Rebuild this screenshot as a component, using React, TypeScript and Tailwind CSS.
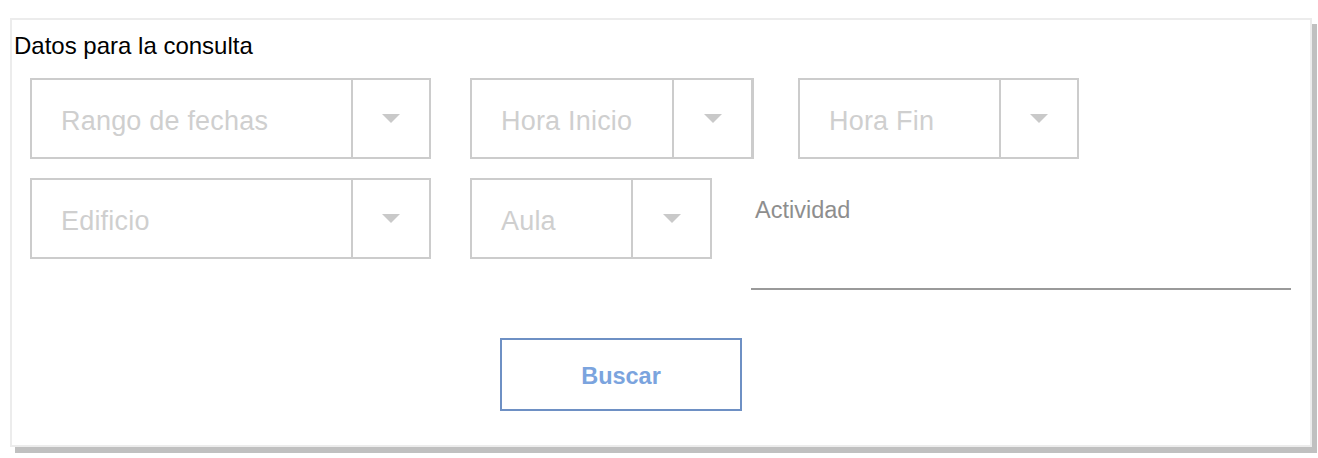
import React from "react";

function Tri() {
  return (
    <svg width="18" height="9" viewBox="0 0 18 9" className="block">
      <polygon points="0,0 18,0 9,9" fill="#c9c9c9" />
    </svg>
  );
}

function SelectBox({
  label,
  width,
  textW,
  thickRight = false,
}: {
  label: string;
  width: string;
  textW: string;
  thickRight?: boolean;
}) {
  return (
    <div
      className={`flex h-[81px] ${width} border-2 border-[#cccccc] ${thickRight ? "border-r-[3px]" : ""} shrink-0`}
    >
      <div className={`flex items-center ${textW} h-full border-r-2 border-[#cccccc] pl-[29px] pt-[6px]`}>
        <span className="text-[27px] tracking-[0.2px] text-[#cfcfcf] leading-none">{label}</span>
      </div>
      <div className="flex-1 flex items-center justify-center">
        <Tri />
      </div>
    </div>
  );
}

export default function App() {
  return (
    <div
      className="w-[1318px] h-[458px] bg-white pt-[18px] pl-[10px]"
      style={{ fontFamily: '"Liberation Sans", Arial, sans-serif' }}
    >
      <div className="w-[1302px] h-[429px] border-2 border-[#ececec] shadow-[5px_6px_0_#c0c0c0] bg-white flex flex-col">
        <div className="pl-[2px] pt-[14px] h-[58px] text-[24px] text-black leading-none">
          Datos para la consulta
        </div>
        <div className="flex pl-[18px]">
          <SelectBox label="Rango de fechas" width="w-[401px]" textW="w-[321px]" />
          <div className="w-[39px] shrink-0" />
          <SelectBox label="Hora Inicio" width="w-[284px]" textW="w-[202px]" thickRight />
          <div className="w-[44px] shrink-0" />
          <SelectBox label="Hora Fin" width="w-[281px]" textW="w-[201px]" />
        </div>
        <div className="flex pl-[18px] mt-[19px]">
          <SelectBox label="Edificio" width="w-[401px]" textW="w-[321px]" />
          <div className="w-[39px] shrink-0" />
          <SelectBox label="Aula" width="w-[242px]" textW="w-[161px]" />
          <div className="w-[39px] shrink-0" />
          <div className="w-[540px] h-[112px] flex flex-col border-b-2 border-[#9a9a9a]">
            <span className="pl-[4px] pt-[21px] text-[23.5px] text-[#8e8e8e] leading-none">
              Actividad
            </span>
          </div>
        </div>
        <div className="pl-[488px] mt-[48px]">
          <button className="w-[242px] h-[73px] border-2 border-[#6e90c4] bg-white flex items-center justify-center pt-[4px]">
            <span className="text-[23.5px] font-bold text-[#7ba4de] leading-none">Buscar</span>
          </button>
        </div>
      </div>
    </div>
  );
}
